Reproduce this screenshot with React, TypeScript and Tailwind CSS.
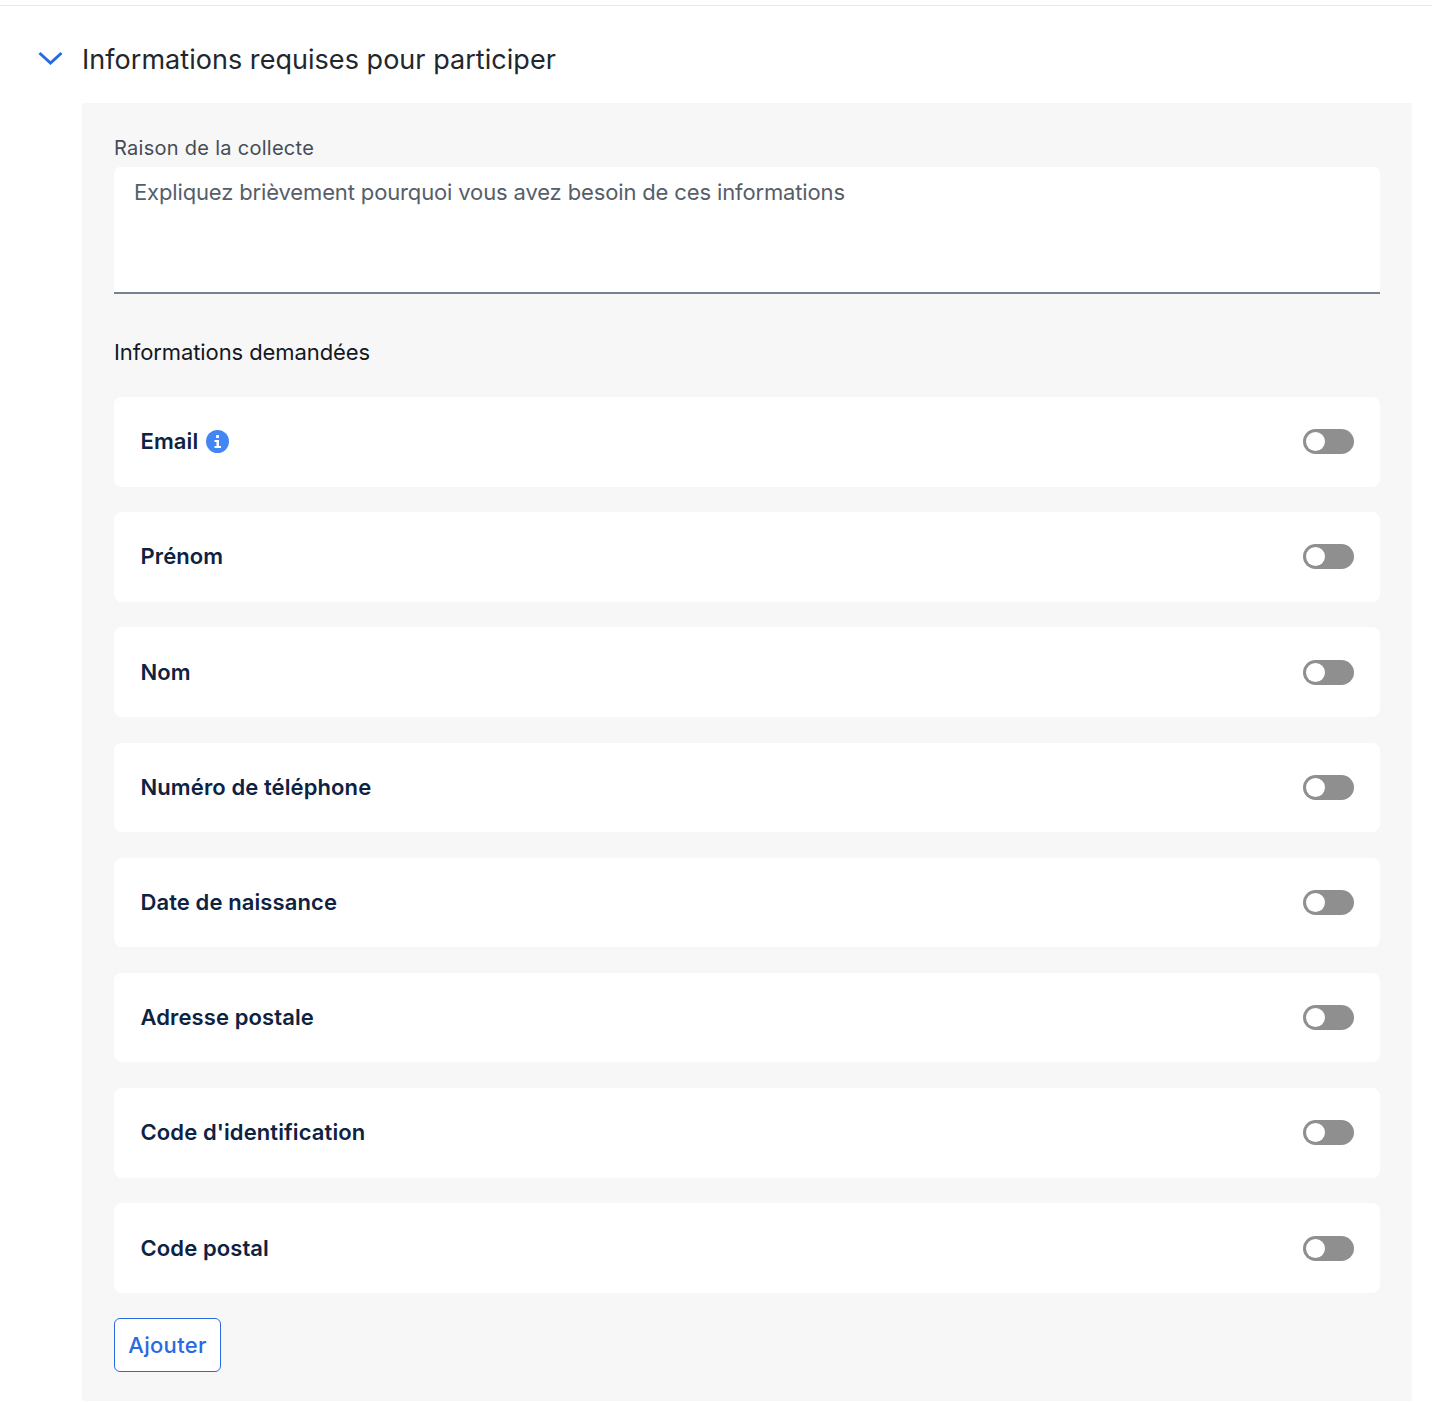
const fields = [
  "Email",
  "Prénom",
  "Nom",
  "Numéro de téléphone",
  "Date de naissance",
  "Adresse postale",
  "Code d'identification",
  "Code postal",
];

const Toggle = () => (
  <div className="flex h-[25px] w-[51px] items-center rounded-full bg-[#8f8f8f] pl-[3px]">
    <div className="h-[19px] w-[19px] rounded-full bg-white" />
  </div>
);

const App = () => {
  return (
    <div className="min-h-[1402px] bg-white font-['Inter',sans-serif]">
      <div className="h-[6px] border-b border-[#e8e8e8]" />
      <div className="flex h-[97px] items-center pt-[11px]">
        <svg
          className="mb-[4px] ml-[38px] mr-[19px] h-[14px] w-[25px]"
          viewBox="0 0 25 14"
          fill="none"
          stroke="#2a6ae0"
          strokeWidth="3"
        >
          <path d="M1.5 2 L12.5 12 L23.5 2" />
        </svg>
        <h2 className="text-[27px] leading-[36px] tracking-[0.04px] text-[#22272e]">
          Informations requises pour participer
        </h2>
      </div>
      <div className="ml-[82px] mr-[20px] h-[1298px] bg-[#f7f7f7] px-[32px] pt-[32px]">
        <label className="block text-[20px] leading-[26px] tracking-[0.28px] text-[#454c57]">
          Raison de la collecte
        </label>
        <textarea
          className="mt-[6px] block h-[127px] w-full resize-none rounded-t-[6px] border-b-2 border-[#77818f] bg-white px-[20px] py-[10px] text-[22px] leading-[30px] tracking-[-0.14px] outline-none placeholder:text-[#565e69]"
          placeholder="Expliquez brièvement pourquoi vous avez besoin de ces informations"
        />
        <p className="mb-[30px] mt-[43px] text-[22px] leading-[30px] tracking-[-0.09px] text-[#14181f]">
          Informations demandées
        </p>
        <div className="flex flex-col gap-[25.7px]">
          {fields.map((name) => (
            <div
              key={name}
              className="flex h-[89.5px] items-center justify-between rounded-[8px] bg-white pl-[26.5px] pr-[26px]"
            >
              <div className="flex items-center gap-[8px]">
                <span className="text-[22px] font-semibold tracking-[0.1px] text-[#0e2242]">{name}</span>
                {name === "Email" && (
                  <svg className="h-[23px] w-[23px]" viewBox="0 0 23 23">
                    <circle cx="11.5" cy="11.5" r="11.5" fill="#4285f4" />
                    <rect x="10" y="5" width="3" height="3" fill="#fff" />
                    <path d="M8.5 10h4.5v6h2v2h-6.5v-2h2v-4h-2z" fill="#fff" />
                  </svg>
                )}
              </div>
              <Toggle />
            </div>
          ))}
        </div>
        <button className="mt-[25px] h-[54px] w-[107px] rounded-[6px] border border-[#2a6ae0] bg-white pt-[1px] text-[22px] font-medium tracking-[0.3px] text-[#2a6ae0]">
          Ajouter
        </button>
      </div>
    </div>
  );
};

export default App;
